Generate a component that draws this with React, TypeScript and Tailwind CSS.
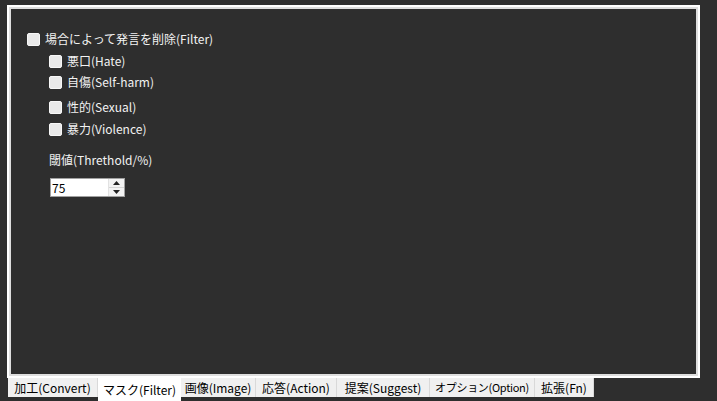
import React from "react";

const font = {
  fontFamily: '"Noto Sans CJK JP", "Noto Sans", sans-serif',
};

function Box() {
  return (
    <span className="inline-block w-[13px] h-[13px] rounded-[2px] bg-[#e9e9e9] border border-[#f7f7f7] shrink-0" />
  );
}

function Check({ label, className = "" }: { label: string; className?: string }) {
  return (
    <div className={"flex items-center gap-[5px] h-[16px] text-[12px] leading-none text-[#f2f2f2] " + className}>
      <Box />
      <span>{label}</span>
    </div>
  );
}

const tabs: { label: string; w: string; size?: string; active?: boolean }[] = [
  { label: "加工(Convert)", w: "w-[90px]" },
  { label: "マスク(Filter)", w: "w-[83px]", active: true },
  { label: "画像(Image)", w: "w-[75px]" },
  { label: "応答(Action)", w: "w-[81px]" },
  { label: "提案(Suggest)", w: "w-[93px]" },
  { label: "オプション(Option)", w: "w-[105px]", size: "text-[11px] tracking-[-0.3px]" },
  { label: "拡張(Fn)", w: "w-[59px]" },
];

export default function App() {
  return (
    <div className="w-[717px] h-[401px] bg-[#2e2e2e] overflow-hidden flex flex-col" style={font}>
      <div className="ml-[7px] mt-[5px] w-[693px] h-[373px] border-2 border-white">
        <div className="h-full border-2 border-[#dedede] bg-[#2e2e2e] pl-[16px] pt-[22px]">
          <Check label="場合によって発言を削除(Filter)" />
          <div className="pl-[22px]">
            <Check label="悪口(Hate)" className="mt-[6px]" />
            <Check label="自傷(Self-harm)" className="mt-[5px]" />
            <Check label="性的(Sexual)" className="mt-[9px]" />
            <Check label="暴力(Violence)" className="mt-[6px]" />
            <div className="mt-[15px] text-[12px] leading-none text-[#f2f2f2] h-[16px] flex items-center">
              閾値(Threthold/%)
            </div>
            <div className="mt-[10px] ml-[1px] w-[75px] h-[19px] bg-white border border-[#a0a0a0] flex items-stretch">
              <span className="flex-1 text-[12px] leading-[17px] text-black pl-[1px]">75</span>
              <div className="w-[16px] flex flex-col border-l border-[#e2e2e2]">
                <div className="flex-1 flex items-center justify-center bg-[#f3f3f3] border-b border-[#d6d6d6]">
                  <svg width="7" height="4" viewBox="0 0 7 4"><path d="M3.5 0L7 4H0z" fill="#222" /></svg>
                </div>
                <div className="flex-1 flex items-center justify-center bg-[#f3f3f3]">
                  <svg width="7" height="4" viewBox="0 0 7 4"><path d="M0 0h7L3.5 4z" fill="#222" /></svg>
                </div>
              </div>
            </div>
          </div>
        </div>
      </div>
      <div className="ml-[8px] flex items-start">
        {tabs.map((t) =>
          t.active ? (
            <div
              key={t.label}
              className={t.w + " h-[25px] -mt-[2px] bg-white text-black text-[12px] leading-none flex items-center justify-center pt-[2px] shrink-0 whitespace-nowrap"}
            >
              {t.label}
            </div>
          ) : (
            <div
              key={t.label}
              className={t.w + " h-[19px] bg-[#f0f0f0] text-black leading-none flex items-center justify-center border-r border-[#d9d9d9] shrink-0 whitespace-nowrap " + (t.size ?? "text-[12px]")}
            >
              {t.label}
            </div>
          )
        )}
      </div>
    </div>
  );
}
